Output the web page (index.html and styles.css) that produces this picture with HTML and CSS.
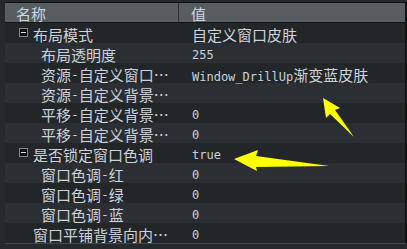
FILE: index.html
```
<!DOCTYPE html>
<html lang="zh-CN">
<head>
  <meta charset="UTF-8">
  <title>属性</title>
  <link rel="stylesheet" href="styles.css">
</head>
<body>
  <div class="tree">
    <div class="head">
      <div class="head-name">名称</div>
      <div class="head-val">值</div>
    </div>

    <div class="row">
      <div class="name lvl0"><span class="toggle"></span>布局模式</div>
      <div class="val"><span class="zh">自定义窗口皮肤</span></div>
    </div>
    <div class="row">
      <div class="name lvl1">布局透明度</div>
      <div class="val">255</div>
    </div>
    <div class="row">
      <div class="name lvl1">资源<span class="dash">-</span>自定义窗口…</div>
      <div class="val">Window_DrillUp<span class="zh">渐变蓝皮肤</span></div>
    </div>
    <div class="row">
      <div class="name lvl1">资源<span class="dash">-</span>自定义背景…</div>
      <div class="val"></div>
    </div>
    <div class="row">
      <div class="name lvl1">平移<span class="dash">-</span>自定义背景…</div>
      <div class="val">0</div>
    </div>
    <div class="row">
      <div class="name lvl1">平移<span class="dash">-</span>自定义背景…</div>
      <div class="val">0</div>
    </div>
    <div class="row">
      <div class="name lvl0"><span class="toggle"></span>是否锁定窗口色调</div>
      <div class="val">true</div>
    </div>
    <div class="row">
      <div class="name lvl1">窗口色调<span class="dash">-</span>红</div>
      <div class="val">0</div>
    </div>
    <div class="row">
      <div class="name lvl1">窗口色调<span class="dash">-</span>绿</div>
      <div class="val">0</div>
    </div>
    <div class="row">
      <div class="name lvl1">窗口色调<span class="dash">-</span>蓝</div>
      <div class="val">0</div>
    </div>
    <div class="row">
      <div class="name lvl0"><span class="toggle empty"></span>窗口平铺背景向内…</div>
      <div class="val">0</div>
    </div>
  </div>

  <!-- yellow annotation arrows drawn over the list -->
  <svg class="marks" width="407" height="249" viewBox="0 0 407 249">
    <polygon points="323,98 340,108 335,110 354,137 330,114 326,118" fill="#ffff00"/>
    <polygon points="234,159 258,150 256,156 329,166 256,167 257,171" fill="#ffff00"/>
  </svg>
</body>
</html>
```

FILE: styles.css
```
* {
  margin: 0;
  padding: 0;
  box-sizing: border-box;
}

body {
  width: 407px;
  height: 249px;
  background-color: #26292c;
  padding: 2px 0 0 5px;
  position: relative;
  overflow: hidden;
  font-family: "Noto Sans CJK SC", "DejaVu Sans", sans-serif;
  font-size: 15px;
  color: #cdd3da;
}

.tree {
  width: 402px;
  border-top: 1px solid #0e1012;
  border-right: 2px solid #111315;
  border-bottom: 1px solid #45494d;
}

/* Header */
.head {
  display: flex;
  height: 20px;
  background-color: #585d61;
  border-bottom: 1px solid #141618;
  color: #c9d6e4;
  line-height: 15px;
}

.head-name {
  width: 174px;
  padding: 3px 0 0 11px;
  border-right: 1px solid #2c2f32;
}

.head-val {
  flex: 1;
  padding: 3px 0 0 12px;
}

/* Rows */
.row {
  display: flex;
  height: 20px;
  background-color: #222629;
}

.row:nth-of-type(odd) {
  background-color: #2b2f33;
}

.name {
  width: 175px;
  padding-top: 4px;
  line-height: 16px;
  white-space: nowrap;
  display: flex;
  align-items: flex-start;
}

.lvl0 {
  padding-left: 14px;
}

.lvl1 {
  padding-left: 36px;
}

.dash {
  font-family: "DejaVu Sans Mono", monospace;
  font-size: 13px;
}

.toggle {
  position: relative;
  width: 9px;
  height: 9px;
  margin: 1px 5px 0 0;
  border: 1px solid #80868b;
  background-color: #0c0d0e;
  flex-shrink: 0;
}

.toggle::after {
  content: "";
  position: absolute;
  left: 1px;
  top: 3px;
  width: 5px;
  height: 1px;
  background-color: #d6dade;
}

.toggle.empty {
  visibility: hidden;
}

.val {
  flex: 1;
  padding: 4px 0 0 12px;
  line-height: 16px;
  font-family: "DejaVu Sans Mono", monospace;
  font-size: 12px;
  color: #c9d2dc;
  white-space: nowrap;
}

.val .zh {
  font-family: "Noto Sans CJK SC", sans-serif;
  font-size: 15px;
  color: #cdd3da;
}

.marks {
  position: absolute;
  left: 0;
  top: 0;
  pointer-events: none;
}
```
